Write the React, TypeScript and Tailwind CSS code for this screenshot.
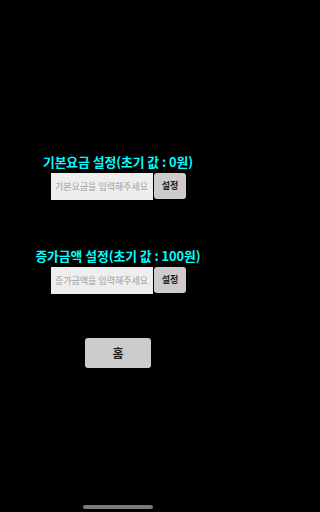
import React from 'react';

const SettingBlock = ({ title, placeholder }: { title: string; placeholder: string }) => (
  <div className="flex w-full flex-col items-center">
    <h2 className="text-[12.75px] leading-[16px] font-bold text-[#00ffff]">{title}</h2>
    <div className="mt-[3px] flex w-full items-start pl-[51px]">
      <input
        className="w-[102px] h-[27px] bg-[#eeeeee] pl-[4px] pr-[2px] text-[9px] text-black placeholder:text-[#a0a0a0] outline-none"
        placeholder={placeholder}
      />
      <button className="ml-[1px] w-[32px] h-[26px] rounded-[3px] bg-[#cccccc] text-[9px] font-bold text-[#222] shadow-[0_1px_2px_rgba(0,0,0,0.4)]">
        설정
      </button>
    </div>
  </div>
);

const App = () => {
  return (
    <div className="min-h-screen w-full bg-black">
      <div
        className="relative w-[236px] h-[512px] bg-black flex flex-col items-center pt-[154px]"
        style={{ fontFamily: '"Noto Sans CJK KR", "Noto Sans", sans-serif' }}
      >
        <SettingBlock title="기본요금 설정(초기 값 : 0원)" placeholder="기본요금을 입력해주세요" />
        <div className="mt-[48px] w-full">
          <SettingBlock title="증가금액 설정(초기 값 : 100원)" placeholder="증가금액을 입력해주세요" />
        </div>
        <button className="mt-[44px] w-[66px] h-[30px] rounded-[3px] bg-[#cccccc] text-[12px] font-bold text-[#222]">
          홈
        </button>
        <div className="absolute bottom-[3px] left-[83px] w-[70px] h-[4px] rounded-full bg-[#7a7a7a]" />
      </div>
    </div>
  );
};

export default App;
